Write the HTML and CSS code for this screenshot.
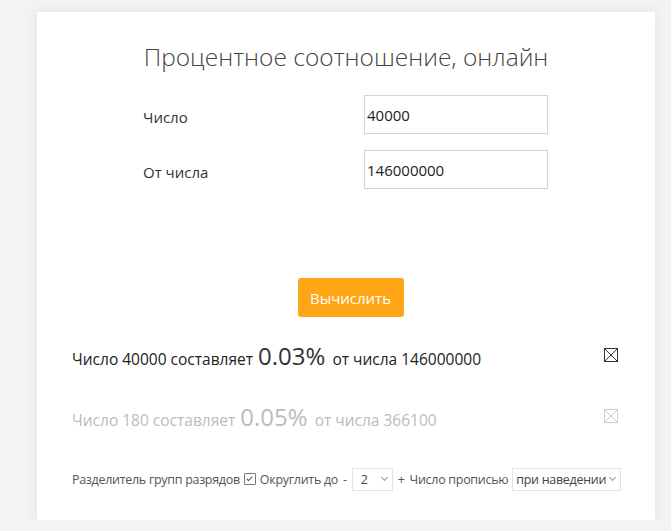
FILE: index.html
```html
<!DOCTYPE html>
<html lang="ru">
<head>
  <meta charset="UTF-8">
  <meta name="viewport" content="width=device-width, initial-scale=1">
  <title>Процентное соотношение, онлайн</title>
  <link rel="stylesheet" href="styles.css">
</head>
<body>

<div class="calculator">
  <h1>Процентное соотношение, онлайн</h1>

  <div class="form">
    <div class="row">
      <label for="num">Число</label>
      <input type="text" id="num" value="40000">
    </div>
    <div class="row">
      <label for="total">От числа</label>
      <input type="text" id="total" value="146000000">
    </div>
    <div class="actions">
      <button>Вычислить</button>
    </div>
  </div>

  <div class="results">
    <div class="result">
      <span>Число 40000 составляет <b>0.03%</b> от числа 146000000</span>
      <span class="close"></span>
    </div>
    <div class="result old">
      <span>Число 180 составляет <b>0.05%</b> от числа 366100</span>
      <span class="close"></span>
    </div>
  </div>

  <div class="options">
    <span>Разделитель групп разрядов</span>
    <span class="check"></span>
    <span>Округлить до</span>
    <span class="sign">-</span>
    <span class="select small">2</span>
    <span class="sign">+</span>
    <span>Число прописью</span>
    <span class="select">при наведении</span>
  </div>
</div>

</body>
</html>
```

FILE: styles.css
```css
body {
  margin: 0;
  font-family: "Open Sans", Arial, sans-serif;
  background: #f3f3f3;
  color: #333;
}
.calculator {
  background: white;
  width: 618px;
  height: 508px;
  margin: 12px 0 0 37px;
  box-sizing: border-box;
  padding: 29px 37px 0 35px;
  box-shadow: 0 0 12px rgba(0,0,0,0.08);
}
h1 {
  margin: 0;
  font-size: 24.5px;
  font-weight: 300;
  line-height: 32px;
  color: #444;
  text-align: center;
  padding-left: 2px;
}
.form {
  width: 405px;
  margin: 22px 0 0 71px;
}
.row {
  display: flex;
  justify-content: space-between;
  align-items: center;
  margin-bottom: 16px;
  font-size: 15px;
}
.row label {
  padding-top: 4px;
}
.row input {
  width: 184px;
  height: 39px;
  box-sizing: border-box;
  border: 1px solid #d4d4d4;
  padding: 0 0 0 2px;
  font-family: inherit;
  font-size: 15px;
  color: #222;
  outline: none;
}
.actions {
  display: flex;
  justify-content: center;
  padding: 73px 0 0 10px;
}
button {
  width: 106px;
  height: 39px;
  border: none;
  border-radius: 3px;
  background: #ffa617;
  color: white;
  font-family: inherit;
  font-size: 15px;
}
.results {
  margin-top: 23px;
}
.result {
  display: flex;
  justify-content: space-between;
  align-items: center;
  height: 30px;
  margin-bottom: 31px;
  font-size: 15.5px;
  color: #222;
}
.result:last-child {
  margin-bottom: 0;
}
.result b {
  font-weight: 400;
  font-size: 24px;
  color: #333;
  margin: 0 3px 0 1px;
}
.result.old {
  color: #bbb;
}
.result.old b {
  color: #bbb;
}
.close {
  width: 14px;
  height: 14px;
  box-sizing: border-box;
  border: 1px solid #333;
  background:
    linear-gradient(45deg, transparent 46%, #333 46%, #333 54%, transparent 54%),
    linear-gradient(-45deg, transparent 46%, #333 46%, #333 54%, transparent 54%);
}
.old .close {
  border-color: #ccc;
  background:
    linear-gradient(45deg, transparent 46%, #ccc 46%, #ccc 54%, transparent 54%),
    linear-gradient(-45deg, transparent 46%, #ccc 46%, #ccc 54%, transparent 54%);
}
.options {
  display: flex;
  align-items: center;
  gap: 4px;
  height: 24px;
  margin-top: 36px;
  font-size: 12.5px;
  letter-spacing: -0.3px;
  color: #555;
  white-space: nowrap;
}
.sign {
  padding: 0 1px;
}
.check {
  flex-shrink: 0;
  width: 10px;
  height: 10px;
  border: 1px solid #777;
  border-radius: 1px;
  position: relative;
}
.check::after {
  content: "";
  position: absolute;
  left: 3px;
  top: 1px;
  width: 2px;
  height: 5px;
  border: solid #555;
  border-width: 0 1px 1px 0;
  transform: rotate(45deg);
}
.select {
  flex-shrink: 0;
  height: 23px;
  box-sizing: border-box;
  border: 1px solid #e3e3e3;
  padding: 0 14px 0 3px;
  display: flex;
  align-items: center;
  position: relative;
  font-size: 12.5px;
  color: #444;
}
.select::after {
  content: "";
  position: absolute;
  right: 5px;
  top: 6px;
  width: 4px;
  height: 4px;
  border: solid #999;
  border-width: 0 1px 1px 0;
  transform: rotate(45deg);
}
.select.small {
  width: 41px;
  padding-left: 8px;
}
```
